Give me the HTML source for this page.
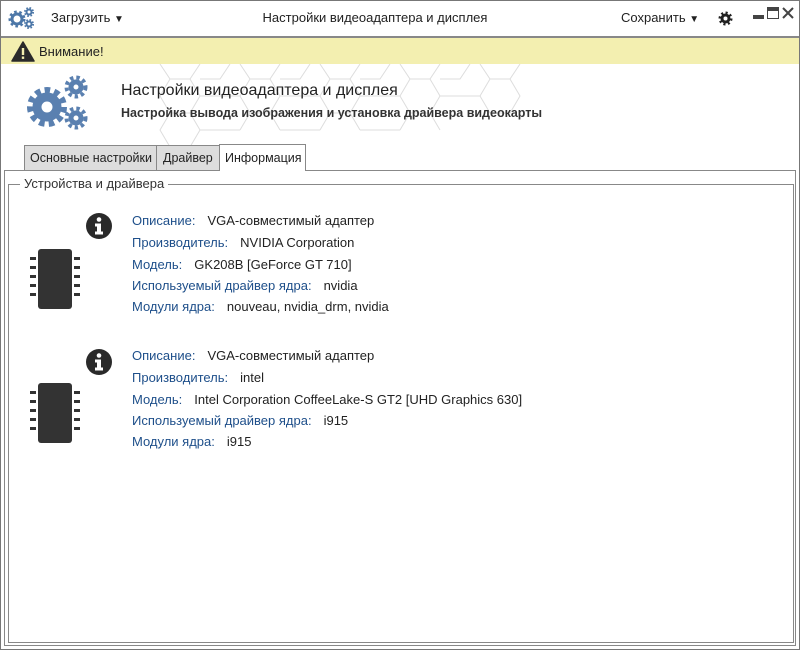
<!DOCTYPE html>
<html><head><meta charset="utf-8"><style>
*{margin:0;padding:0;box-sizing:border-box}
body{width:800px;height:650px;background:#fff;font-family:"Liberation Sans","DejaVu Sans",sans-serif;font-size:13px;color:#222;position:relative;overflow:hidden}
.win{position:absolute;left:0;top:0;width:800px;height:650px;border:1px solid #777}
.abs{position:absolute;white-space:nowrap}
.lbl{color:#1e4f8a}
.row{position:absolute;left:132px;white-space:nowrap}
.row span.v{margin-left:12px}
.tab{font-size:12.5px}
</style></head><body>
<div class="win"></div>
<svg class="abs" style="left:8px;top:6px" width="28" height="24" viewBox="0 0 28 24">
<g fill="none" stroke="#4c77a8">
<circle cx="9" cy="13" r="5" stroke-width="3"/><circle cx="9" cy="13" r="7" stroke-width="3" stroke-dasharray="2.5 2.5"/>
<circle cx="21" cy="6" r="2.5" stroke-width="2"/><circle cx="21" cy="6" r="4" stroke-width="2" stroke-dasharray="1.6 1.6"/>
<circle cx="21" cy="18" r="2.5" stroke-width="2"/><circle cx="21" cy="18" r="4" stroke-width="2" stroke-dasharray="1.6 1.6"/>
</g></svg>
<div class="abs" style="left:51px;top:10px">Загрузить <span style="font-size:10px">▼</span></div>
<div class="abs" style="left:0;width:750px;top:10px;text-align:center">Настройки видеоадаптера и дисплея</div>
<div class="abs" style="left:621px;top:10px">Сохранить <span style="font-size:10px">▼</span></div>
<svg class="abs" style="left:718px;top:11px" width="15" height="15" viewBox="0 0 15 15"><circle cx="7.5" cy="7.5" r="3.5" fill="none" stroke="#222" stroke-width="3"/><circle cx="7.5" cy="7.5" r="5.5" fill="none" stroke="#222" stroke-width="3" stroke-dasharray="2 2.3"/></svg>
<div class="abs" style="left:753px;top:15px;width:11px;height:4px;background:#444"></div>
<div class="abs" style="left:767px;top:7px;width:12px;height:12px;border:1.5px solid #444;border-top-width:4px"></div>
<svg class="abs" style="left:782px;top:7px" width="12" height="12" viewBox="0 0 12 12"><path d="M1 1L11 11M11 1L1 11" stroke="#444" stroke-width="2"/></svg>
<div class="abs" style="left:1px;top:36px;width:798px;height:2px;background:#888"></div>
<div class="abs" style="left:1px;top:38px;width:798px;height:26px;background:#f3efb0"></div>
<svg class="abs" style="left:11px;top:41px" width="24" height="21" viewBox="0 0 24 21"><path d="M12 1 L23 20 L1 20 Z" fill="#2a2a2a" stroke="#2a2a2a" stroke-linejoin="round" stroke-width="1.5"/><rect x="10.8" y="7" width="2.4" height="7" fill="#f3efb0"/><rect x="10.8" y="15.5" width="2.4" height="2.4" fill="#f3efb0"/></svg>
<div class="abs" style="left:39px;top:44px">Внимание!</div>
<svg class="abs" style="left:140px;top:64px" width="440" height="82" viewBox="0 0 440 82"><g fill="none" stroke="#ddd" stroke-width="1">
<path d="M20 0 l10 15 h20 l10 -15 M60 15 h20 l10 -15 M100 0 l10 15 h20 l10 -15 M140 15 h20 l10 -15 M180 0 l10 15 h20 l10 -15 M220 15 h20 l10 -15 M260 0 l10 15 h20 l10 -15 M300 15 h20 l10 -15 M340 0 l10 15 h20 l10 -15 M30 15 l-10 17 l10 17 h20 l10 -17 l-10 -17 M110 15 l-10 17 l10 17 h20 l10 -17 l-10 -17 M190 15 l-10 17 l10 17 h20 l10 -17 l-10 -17 M270 15 l-10 17 l10 17 h20 l10 -17 l-10 -17 M350 15 l-10 17 l10 17 h20 l10 -17 l-10 -17 M60 32 h40 M140 32 h40 M220 32 h40 M300 32 h40 M30 49 l-10 17 l10 17 M50 49 l10 17 l-10 17 M110 49 l-10 17 M130 49 l10 17 M190 49 l-10 17 M210 49 l10 17 M270 49 l-10 17 M290 49 l10 17 M60 66 h40 M140 66 h40 M220 66 h40"/></g></svg>
<svg class="abs" style="left:25px;top:73px" width="68" height="62" viewBox="0 0 68 62"><g fill="none" stroke="#5a80b0">
<circle cx="22" cy="34" r="10" stroke-width="9"/><circle cx="22" cy="34" r="17" stroke-width="6" stroke-dasharray="5.5 4.2"/>
<circle cx="51" cy="14" r="5" stroke-width="5"/><circle cx="51" cy="14" r="9.5" stroke-width="4" stroke-dasharray="3.4 3"/>
<circle cx="51" cy="45" r="5" stroke-width="5"/><circle cx="51" cy="45" r="9.5" stroke-width="4" stroke-dasharray="3.4 3"/>
</g></svg>
<div class="abs" style="left:121px;top:82px;font-size:16px">Настройки видеоадаптера и дисплея</div>
<div class="abs" style="left:121px;top:106px;font-size:12.5px;font-weight:bold;color:#333">Настройка вывода изображения и установка драйвера видеокарты</div>
<div class="abs tab" style="left:24px;top:145px;width:133px;height:26px;background:#ddd;border:1px solid #888;padding:5px 0 0 5px">Основные настройки</div>
<div class="abs tab" style="left:156px;top:145px;width:64px;height:26px;background:#ddd;border:1px solid #888;padding:5px 0 0 6px">Драйвер</div>
<div class="abs tab" style="left:219px;top:144px;width:87px;height:27px;background:#fff;border:1px solid #888;border-bottom:none;padding:6px 0 0 5px;z-index:2">Информация</div>
<div class="abs" style="left:4px;top:170px;width:792px;height:476px;border:1px solid #888"></div>
<div class="abs" style="left:8px;top:184px;width:786px;height:459px;border:1px solid #888"></div>
<div class="abs" style="left:20px;top:176px;background:#fff;padding:0 4px;color:#333">Устройства и драйвера</div>
<svg class="abs" style="left:85px;top:212px" width="28" height="28" viewBox="0 0 28 28"><circle cx="14" cy="14" r="13" fill="#2a2a2a"/><circle cx="14" cy="7.5" r="2.3" fill="#fff"/><path d="M10 11.5h6v8h2v3h-8v-3h2v-5h-2z" fill="#fff"/></svg>
<svg class="abs" style="left:28px;top:248px" width="58" height="62" viewBox="0 0 58 62"><rect x="10" y="1" width="34" height="60" rx="3" fill="#333"/><g fill="#333"><rect x="2" y="9" width="6" height="3"/><rect x="2" y="18" width="6" height="3"/><rect x="2" y="27" width="6" height="3"/><rect x="2" y="36" width="6" height="3"/><rect x="2" y="45" width="6" height="3"/><rect x="46" y="9" width="6" height="3"/><rect x="46" y="18" width="6" height="3"/><rect x="46" y="27" width="6" height="3"/><rect x="46" y="36" width="6" height="3"/><rect x="46" y="45" width="6" height="3"/></g></svg>
<div class="row" style="top:213px"><span class="lbl">Описание:</span><span class="v">VGA-совместимый адаптер</span></div>
<div class="row" style="top:235px"><span class="lbl">Производитель:</span><span class="v">NVIDIA Corporation</span></div>
<div class="row" style="top:257px"><span class="lbl">Модель:</span><span class="v">GK208B [GeForce GT 710]</span></div>
<div class="row" style="top:278px"><span class="lbl">Используемый драйвер ядра:</span><span class="v">nvidia</span></div>
<div class="row" style="top:299px"><span class="lbl">Модули ядра:</span><span class="v">nouveau, nvidia_drm, nvidia</span></div>
<svg class="abs" style="left:85px;top:348px" width="28" height="28" viewBox="0 0 28 28"><circle cx="14" cy="14" r="13" fill="#2a2a2a"/><circle cx="14" cy="7.5" r="2.3" fill="#fff"/><path d="M10 11.5h6v8h2v3h-8v-3h2v-5h-2z" fill="#fff"/></svg>
<svg class="abs" style="left:28px;top:382px" width="58" height="62" viewBox="0 0 58 62"><rect x="10" y="1" width="34" height="60" rx="3" fill="#333"/><g fill="#333"><rect x="2" y="9" width="6" height="3"/><rect x="2" y="18" width="6" height="3"/><rect x="2" y="27" width="6" height="3"/><rect x="2" y="36" width="6" height="3"/><rect x="2" y="45" width="6" height="3"/><rect x="46" y="9" width="6" height="3"/><rect x="46" y="18" width="6" height="3"/><rect x="46" y="27" width="6" height="3"/><rect x="46" y="36" width="6" height="3"/><rect x="46" y="45" width="6" height="3"/></g></svg>
<div class="row" style="top:348px"><span class="lbl">Описание:</span><span class="v">VGA-совместимый адаптер</span></div>
<div class="row" style="top:370px"><span class="lbl">Производитель:</span><span class="v">intel</span></div>
<div class="row" style="top:392px"><span class="lbl">Модель:</span><span class="v">Intel Corporation CoffeeLake-S GT2 [UHD Graphics 630]</span></div>
<div class="row" style="top:413px"><span class="lbl">Используемый драйвер ядра:</span><span class="v">i915</span></div>
<div class="row" style="top:434px"><span class="lbl">Модули ядра:</span><span class="v">i915</span></div>
</body></html>
